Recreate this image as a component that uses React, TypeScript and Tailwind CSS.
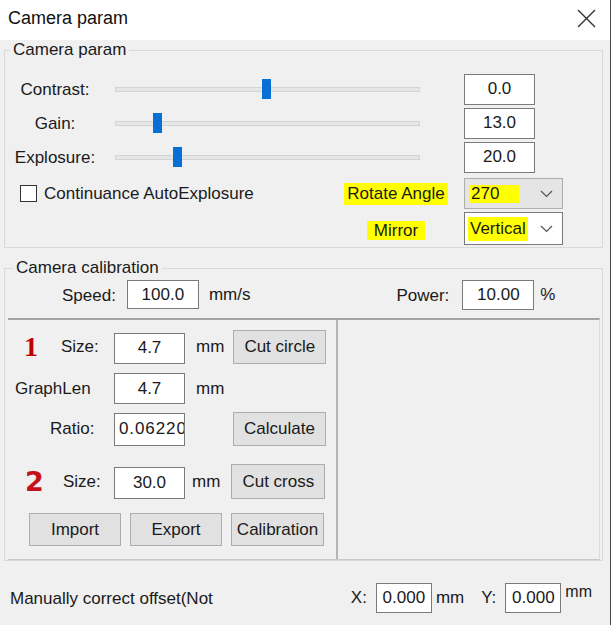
import React from 'react';

interface BoxProps {
  value: string;
  className?: string;
}

const NumBox: React.FC<BoxProps> = ({ value, className = '' }) => (
  <div
    className={`bg-white border border-[#7a7a7a] flex items-center justify-center text-[17px] text-[#1a1a1a] overflow-hidden whitespace-nowrap shrink-0 ${className}`}
  >
    {value}
  </div>
);

const Btn: React.FC<BoxProps> = ({ value, className = '' }) => (
  <div
    className={`bg-[#e1e1e1] border border-[#adadad] flex items-center justify-center text-[17px] text-[#1a1a1a] shrink-0 ${className}`}
  >
    {value}
  </div>
);

const Slider = ({ pos }: { pos: number }) => (
  <div className="relative w-[305px] h-[20px] flex items-center ml-[10px] shrink-0">
    <div className="w-full h-[5px] bg-[#e6e6e6] border border-[#d4d4d4]" />
    <div className="absolute top-0 w-[9px] h-[20px] bg-[#0a6fd4]" style={{ left: pos }} />
  </div>
);

const Chevron = () => (
  <svg width="13" height="8" viewBox="0 0 13 8" className="shrink-0">
    <path d="M1 1l5.5 5.5L12 1" fill="none" stroke="#555" strokeWidth="1.2" />
  </svg>
);

const sliders = [
  { label: 'Contrast:', pos: 147, value: '0.0' },
  { label: 'Gain:', pos: 38, value: '13.0' },
  { label: 'Explosure:', pos: 58, value: '20.0' },
];

export default function App() {
  return (
    <div className="w-[613px] h-[625px] flex bg-white font-['Liberation_Sans',Arial,sans-serif] text-[17px] text-[#1a1a1a] overflow-hidden">
      <div className="w-[611px] h-full flex flex-col border-r border-[#4a4a4a]">
        {/* title bar */}
        <div className="h-[40px] bg-white flex items-center justify-between pl-[8px] pr-[14px] pb-[3px] shrink-0">
          <span className="text-[18px] text-[#111]">Camera param</span>
          <svg width="19" height="19" viewBox="0 0 19 19">
            <path d="M1 1l17 17M18 1L1 18" stroke="#333" strokeWidth="1.4" />
          </svg>
        </div>

        <div className="flex-1 bg-[#f0f0f0] flex flex-col">
          {/* Camera param group */}
          <fieldset className="ml-[4px] w-[599px] border border-[#d9d9d9] pb-[2px]">
            <legend className="ml-[5px] px-[3px] h-[20px] leading-[20px]">Camera param</legend>
            <div className="pt-[12px] flex flex-col">
              {sliders.map((s) => (
                <div key={s.label} className="h-[34px] flex items-center">
                  <div className="w-[100px] text-center shrink-0 pt-[2px]">{s.label}</div>
                  <Slider pos={s.pos} />
                  <NumBox value={s.value} className="ml-[44px] w-[71px] h-[31px]" />
                </div>
              ))}

              <div className="mt-[4px] h-[31px] flex items-center">
                <div className="flex-1 flex items-center pl-[15px]">
                  <div className="w-[17px] h-[17px] bg-white border border-[#333]" />
                  <span className="ml-[7px]">Continuance AutoExplosure</span>
                </div>
                <div className="w-[112px] flex justify-center">
                  <span className="bg-[#ffff00] px-[3px] h-[22px] leading-[22px]">Rotate Angle</span>
                </div>
                <div className="ml-[12px] w-[99px] h-[31px] bg-[#e5e5e5] border border-[#adadad] flex items-center pl-[5px] pr-[9px]">
                  <span className="bg-[#ffff00] w-[49px] h-[18px] leading-[18px] pl-[1px]">270</span>
                  <span className="flex-1" />
                  <Chevron />
                </div>
                <div className="w-[39px]" />
              </div>

              <div className="mt-[3px] h-[33px] flex items-center">
                <div className="flex-1" />
                <div className="w-[112px] flex justify-center pt-[3px]">
                  <span className="bg-[#ffff00] px-[7px] h-[19px] leading-[19px]">Mirror</span>
                </div>
                <div className="ml-[12px] w-[99px] h-[33px] bg-white border border-[#7a7a7a] flex items-center pl-[3px] pr-[9px]">
                  <span className="bg-[#ffff00] px-[2px] h-[24px] leading-[24px]">Vertical</span>
                  <span className="flex-1" />
                  <Chevron />
                </div>
                <div className="w-[39px]" />
              </div>
            </div>
          </fieldset>

          {/* Camera calibration group */}
          <fieldset className="mt-[10px] ml-[4px] w-[599px] border border-[#d9d9d9]">
            <legend className="ml-[8px] px-[3px] h-[20px] leading-[20px]">Camera calibration</legend>
            <div className="mt-[2px] h-[29px] flex items-center">
              <span className="ml-[57px] pt-[2px]">Speed:</span>
              <NumBox value="100.0" className="ml-[11px] w-[72px] h-[29px]" />
              <span className="ml-[10px]">mm/s</span>
              <span className="ml-[146px] pt-[2px]">Power:</span>
              <NumBox value="10.00" className="ml-[13px] w-[72px] h-[30px]" />
              <span className="ml-[6px]">%</span>
            </div>

            <div className="mt-[9px] ml-[3px] mr-[2px] h-[242px] flex border-t-2 border-[#a3a3a3] border-r border-b border-r-[#dcdcdc] border-b-[#c8c8c8]">
              <div className="w-[330px] border-r-2 border-[#b5b5b5] flex flex-col pt-[10px]">
                <div className="h-[34px] flex items-center">
                  <div className="w-[106px] flex items-center pl-[16px]">
                    <span className="w-[37px] font-['Liberation_Serif',serif] font-bold text-[28px] leading-none text-[#c00000]">1</span>
                    <span>Size:</span>
                  </div>
                  <NumBox value="4.7" className="w-[71px] h-[31px] mt-[2px]" />
                  <span className="ml-[11px]">mm</span>
                  <Btn value="Cut circle" className="ml-[9px] w-[93px] h-[34px]" />
                </div>

                <div className="mt-[9px] h-[31px] flex items-center">
                  <div className="w-[106px] pl-[7px]">GraphLen</div>
                  <NumBox value="4.7" className="w-[71px] h-[31px]" />
                  <span className="ml-[11px]">mm</span>
                </div>

                <div className="mt-[8px] h-[34px] flex items-center">
                  <div className="w-[106px] pl-[42px]">Ratio:</div>
                  <NumBox value="0.06220" className="w-[71px] h-[33px] !justify-start pl-[4px] tracking-[0.9px]" />
                  <Btn value="Calculate" className="ml-[48px] w-[93px] h-[34px]" />
                </div>

                <div className="mt-[18px] h-[35px] flex items-center">
                  <div className="w-[106px] flex items-center pl-[17px]">
                    <span className="w-[38px] font-['DejaVu_Sans',sans-serif] font-bold text-[27px] leading-none text-[#c4121c]">2</span>
                    <span>Size:</span>
                  </div>
                  <NumBox value="30.0" className="w-[71px] h-[32px] mt-[3px]" />
                  <span className="ml-[7px]">mm</span>
                  <Btn value="Cut cross" className="ml-[11px] w-[94px] h-[35px]" />
                </div>

                <div className="mt-[14px] h-[33px] flex items-center pl-[21px] gap-[9px]">
                  <Btn value="Import" className="w-[92px] h-[33px]" />
                  <Btn value="Export" className="w-[92px] h-[33px]" />
                  <Btn value="Calibration" className="w-[93px] h-[33px]" />
                </div>
              </div>
              <div className="flex-1" />
            </div>
          </fieldset>

          {/* offset row */}
          <div className="mt-[21px] h-[31px] flex items-center pr-[18px]">
            <span className="pl-[10px] flex-1 pt-[3px]">Manually correct offset(Not</span>
            <span>X:</span>
            <NumBox value="0.000" className="ml-[9px] w-[56px] h-[30px]" />
            <span className="ml-[4px]">mm</span>
            <span className="ml-[17px]">Y:</span>
            <NumBox value="0.000" className="ml-[9px] w-[56px] h-[30px]" />
            <span className="ml-[4px] self-start leading-[20px] text-[16px]">mm</span>
          </div>
        </div>
      </div>
    </div>
  );
}
